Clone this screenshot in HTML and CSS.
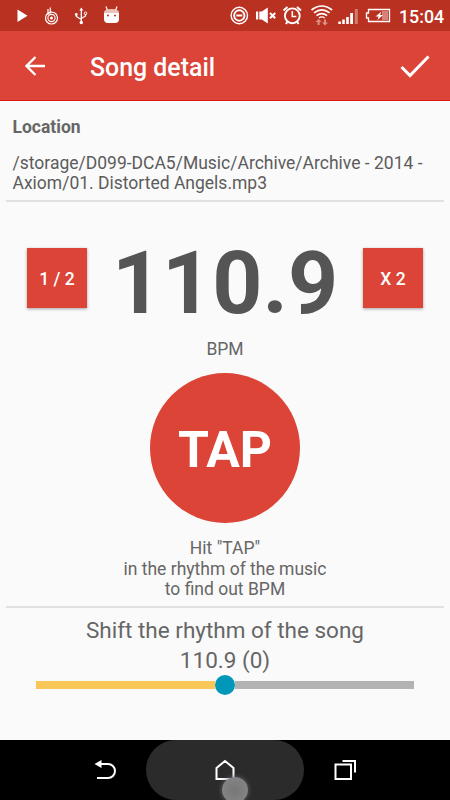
FILE: index.html
```html
<!DOCTYPE html>
<html lang="en">
<head>
  <meta charset="UTF-8" />
  <meta name="viewport" content="width=device-width, initial-scale=1.0"/>
  <title>Song detail</title>
  <link rel="stylesheet" href="styles.css">
</head>
<body>
  <div class="status-bar">
    <svg class="status-left" width="126" height="31" viewBox="0 0 126 31" fill="none" stroke="#fff">
      <!-- play -->
      <path d="M17.500 9.500v12.500l10-6.200z" fill="#fff" stroke="none"/>
      <!-- cleaner -->
      <circle cx="51.500" cy="18" r="6" stroke-width="1.200"/>
      <circle cx="51.500" cy="18" r="3.600" stroke-width="1.100"/>
      <circle cx="51.500" cy="18" r="1.500" fill="#fff" stroke="none"/>
      <path d="M48 9v6M50.300 7.500v6M47.500 14l4-2" stroke-width="1.200"/>
      <!-- usb -->
      <path d="M81.300 10v12M81.300 19.500l-5-3v-2M81.300 18.500l4.200-2.500v-2" stroke-width="1.300"/>
      <path d="M81.300 7.500l2 3h-4z" fill="#fff" stroke="none"/>
      <circle cx="81.300" cy="22.500" r="1.700" fill="#fff" stroke="none"/>
      <circle cx="76.300" cy="14.500" r="1.400" fill="#fff" stroke="none"/>
      <circle cx="85.500" cy="13.300" r="1.300" stroke-width="1"/>
      <!-- android -->
      <path d="M106 6.500l1.300 3.500M117 6.500l-1.300 3.500" stroke-width="1.200"/>
      <path d="M104 12.500q0-3.500 7.500-3.500t7.500 3.500z" fill="#fff" fill-opacity=".7" stroke="none"/>
      <path d="M104 12.500h15v6.500q0 4-4 4h-7q-4 0-4-4z" fill="#fff" stroke="none"/>
      <circle cx="108" cy="15.500" r="1" fill="#b93221" stroke="none"/>
      <circle cx="115" cy="15.500" r="1" fill="#b93221" stroke="none"/>
    </svg>
    <svg class="status-right" width="172" height="31" viewBox="226 0 172 31" fill="none" stroke="#fff">
      <!-- do not disturb -->
      <circle cx="239.300" cy="15.500" r="8.200" stroke-width="1.400"/>
      <circle cx="239.300" cy="15.500" r="5.200" stroke-width="1.900"/>
      <path d="M236.300 15.500h6" stroke-width="2"/>
      <!-- muted -->
      <path d="M256 11.500h2.200v8H256zM259.300 11.500h2.500l6-4v16l-6-4h-2.500z" fill="#fff" stroke="none"/>
      <path d="M270 13l5.200 5.200M275.200 13l-5.200 5.200" stroke-width="2"/>
      <!-- alarm -->
      <circle cx="292.300" cy="15.800" r="7.400" stroke-width="1.900"/>
      <path d="M292.300 11v5.500h4" stroke-width="1.500"/>
      <path d="M283.500 10.500l4-3.500M301 10.500l-4-3.500M287.500 21.500l-1.500 2.500M297 21.500l1.500 2.500" stroke-width="2"/>
      <!-- wifi -->
      <path d="M311.500 10q10.300-8 20.600 0M314 12.800q7.800-6 15.600 0M316.500 15.600q5.300-4 10.600 0" stroke-width="1.700"/>
      <path d="M319 17.800q2.800-1.800 5.600 0" stroke-width="1.400"/>
      <path d="M318.600 19l3 3h-2v3h-2v-3h-2zM325 25.500l3-3h-2v-3h-2v3h-2z" fill="#dc9088" stroke="none"/>
      <!-- signal -->
      <path d="M338.300 21.500h2.600V24h-2.600zM342.200 19.500h2.600V24h-2.600zM346.200 17h2.600v7h-2.600zM350.200 13h2.800v11h-2.800z" fill="#fff" stroke="none"/>
      <path d="M354.800 9h3v15h-3z" fill="#d3796f" stroke="none"/>
      <!-- battery -->
      <path d="M368.500 9.500h21v12h-21v-3.500h-2v-5h2z" stroke-width="1.300"/>
      <path d="M382 11h6v9h-6z" fill="#d98078" stroke="none"/>
      <path d="M381.500 11.500l-6 5h3l-1 3.500 5.500-5h-3z" fill="#fff" stroke="none"/>
    </svg>
    <span class="clock">15:04</span>
  </div>

  <header class="app-bar">
    <svg class="back" width="20" height="20" viewBox="0 0 20 20" fill="none" stroke="#fff" stroke-width="2.300">
      <path d="M20 10H1.500M10.500 1L1.500 10l9 9"/>
    </svg>
    <h1>Song detail</h1>
    <svg class="done" width="30" height="24" viewBox="0 0 30 24" fill="none" stroke="#fff" stroke-width="3">
      <path d="M1.500 13l8.500 8.500L28.500 2.500"/>
    </svg>
  </header>

  <main class="content">
    <section class="location">
      <h2>Location</h2>
      <p>/storage/D099-DCA5/Music/Archive/Archive - 2014 - Axiom/01. Distorted Angels.mp3</p>
    </section>

    <section class="tempo">
      <div class="tempo-row">
        <button class="btn">1 / 2</button>
        <span class="bpm">110.9</span>
        <button class="btn">X 2</button>
      </div>
      <div class="unit">BPM</div>
      <button class="tap">TAP</button>
      <p class="hint">Hit "TAP"<br>in the rhythm of the music<br>to find out BPM</p>
    </section>

    <section class="shift">
      <p>Shift the rhythm of the song</p>
      <p>110.9 (0)</p>
      <div class="slider">
        <div class="fill"></div>
        <div class="thumb"></div>
        <div class="rest"></div>
      </div>
    </section>
  </main>

  <nav class="nav-bar">
    <svg width="24" height="22" viewBox="0 0 24 22" fill="none" stroke="#fff" stroke-width="2">
      <path d="M6 5h9a7 7 0 0 1 0 14H4"/>
      <path d="M1.500 5L8.500 1v8z" fill="#fff" stroke="none"/>
    </svg>
    <div class="home">
      <svg width="22" height="22" viewBox="0 0 22 22" fill="none" stroke="#fff" stroke-width="2">
        <path d="M2.500 9L11 2l8.500 7v11h-17z"/>
      </svg>
      <div class="touch"></div>
    </div>
    <svg width="24" height="22" viewBox="0 0 24 22" fill="none" stroke="#fff" stroke-width="2">
      <path d="M2.500 5.500h15.500V20H2.500z"/>
      <path d="M9.500 2H22v11.500"/>
    </svg>
  </nav>
</body>
</html>
```
FILE: styles.css
```css
* {
  box-sizing: border-box;
}
body {
  margin: 0;
  height: 800px;
  overflow: hidden;
  display: flex;
  flex-direction: column;
  background: #fafafa;
  color: #666;
  font-family: Roboto, sans-serif;
  font-size: 17.5px;
}
h1, h2, p {
  margin: 0;
}
svg {
  display: block;
  flex-shrink: 0;
}
.status-bar {
  display: flex;
  height: 31px;
  background: #b93221;
  color: #fff;
}
.status-right {
  margin-left: auto;
}
.clock {
  width: 52px;
  padding-left: 1px;
  font-size: 17.8px;
  font-weight: 500;
  line-height: 33px;
}
.app-bar {
  display: flex;
  align-items: center;
  height: 70px;
  padding: 0 20px 0 25px;
  background: #db4437;
  border-bottom: 1px solid #dc1a10;
  color: #fff;
}
.app-bar h1 {
  flex: 1;
  margin-left: 45px;
  padding-top: 5px;
  font-size: 24.9px;
  font-weight: 500;
  line-height: 30px;
}
.content {
  flex: 1;
}
.location {
  height: 101px;
  margin: 0 6px;
  padding: 16px 6px 0 6.5px;
  border-bottom: 2px solid #e1e1e1;
}
.location h2 {
  font-size: 17.5px;
  font-weight: bold;
  line-height: 21px;
}
.location p {
  margin-top: 15.4px;
  line-height: 20px;
  color: #5c5c5c;
}
.tempo {
  display: flex;
  flex-direction: column;
  align-items: center;
  height: 406px;
  margin: 0 6px;
  border-bottom: 2px solid #e1e1e1;
  text-align: center;
}
.tempo-row {
  display: flex;
  justify-content: space-between;
  align-items: center;
  width: 396px;
  height: 92px;
  margin-top: 30px;
}
.btn {
  width: 60px;
  height: 60px;
  padding: 1px 0 0;
  border: none;
  background: #db4437;
  color: #fff;
  font-family: inherit;
  font-size: 17.5px;
  font-weight: 500;
  box-shadow: 0 1px 3px rgba(0, 0, 0, 0.35);
}
.bpm {
  padding-top: 9px;
  font-size: 87.5px;
  font-weight: bold;
  line-height: 92px;
  color: #555;
}
.unit {
  margin-top: 15px;
  line-height: 21px;
}
.tap {
  width: 150px;
  height: 150px;
  margin-top: 13px;
  padding: 4px 0 0;
  border: none;
  border-radius: 50%;
  background: #db4437;
  color: #fff;
  font-family: inherit;
  font-size: 50px;
  font-weight: bold;
}
.hint {
  margin-top: 15px;
  line-height: 20.5px;
}
.shift {
  padding-top: 7px;
  text-align: center;
  font-size: 22.5px;
  line-height: 30px;
}
.slider {
  display: flex;
  align-items: center;
  width: 378px;
  height: 20px;
  margin: 0 auto;
}
.fill, .rest {
  flex: 1;
  height: 8px;
}
.fill {
  background: #f9c658;
}
.rest {
  background: #b3b3b3;
}
.thumb {
  width: 20px;
  height: 20px;
  border-radius: 50%;
  background: #0097b9;
}
.nav-bar {
  display: flex;
  justify-content: space-between;
  align-items: center;
  height: 60px;
  padding: 0 93px;
  background: #000;
}
.home {
  position: relative;
  display: flex;
  justify-content: center;
  align-items: center;
  width: 158px;
  height: 60px;
  border-radius: 30px;
  background: #2b2b2b;
  overflow: hidden;
}
/* touch pointer */
.touch {
  position: absolute;
  left: 76px;
  top: 37px;
  width: 26px;
  height: 26px;
  border-radius: 50%;
  background: radial-gradient(#777, #898989);
  box-shadow: 0 0 5px #666678;
}
```
